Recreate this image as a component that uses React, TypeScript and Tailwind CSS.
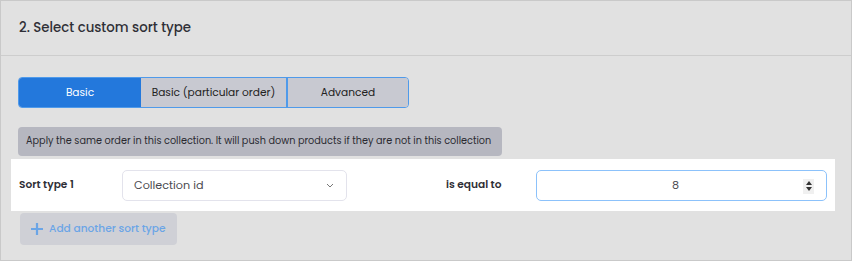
import React from "react";

export default function App() {
  return (
    <div
      className="w-[852px] h-[261px] bg-[#e1e1e1] border border-[#c9c9c9] flex flex-col"
      style={{ fontFamily: "Poppins, Inter, 'Noto Sans', sans-serif" }}
    >
      <div className="h-[55px] border-b border-[#cdcdcd] flex items-center px-[18px] shrink-0">
        <span className="text-[13.3px] font-medium text-[#2f2f36]">2. Select custom sort type</span>
      </div>
      <div className="flex flex-col pl-[17px] pt-[21px]">
        <div className="flex h-[31px] w-[391px] rounded-[4px] border border-[#4f9aea] overflow-hidden text-[10.6px]">
          <div className="w-[122px] bg-[#2378dc] text-white flex items-center justify-center">Basic</div>
          <div className="w-[147px] bg-[#c8c9d1] text-[#222] flex items-center justify-center border-r-2 border-[#4f9aea]">
            Basic (particular order)
          </div>
          <div className="flex-1 bg-[#c8c9d1] text-[#222] flex items-center justify-center">Advanced</div>
        </div>
        <div className="mt-[19px] h-[29px] w-[484px] rounded-[4px] bg-[#b6b7c0] flex items-center pl-[8px] text-[9.7px] text-[#2a2a30] whitespace-nowrap">
          Apply the same order in this collection. It will push down products if they are not in this collection
        </div>
        <div className="mt-[3px] -ml-[7px] w-[824px] h-[52px] bg-white flex items-center">
          <div className="w-[111px] pl-[8px] text-[10.6px] font-semibold text-[#2f2f36]">Sort type 1</div>
          <div className="w-[225px] h-[31px] border border-[#e3e3ec] rounded-[5px] flex items-center justify-between pl-[11px] pr-[12px]">
            <span className="text-[11.2px] text-[#4a4a50]">Collection id</span>
            <svg width="8" height="5" viewBox="0 0 8 5" fill="none" className="shrink-0">
              <path d="M1 1l3 3 3-3" stroke="#777" strokeWidth="1" />
            </svg>
          </div>
          <div className="w-[189px] pl-[99px] text-[10.6px] font-semibold text-[#2f2f36] whitespace-nowrap">is equal to</div>
          <div className="w-[291px] h-[31px] border border-[#8cc2fb] rounded-[5px] flex items-center relative">
            <span className="flex-1 text-center text-[11.2px] text-[#4a4a50] pr-[12px]">8</span>
            <div className="absolute right-[12px] top-[8px] w-[11px] h-[15px] bg-[#f0f0f0] flex flex-col items-center justify-center gap-[2px]">
              <svg width="6" height="4" viewBox="0 0 6 4"><path d="M3 0L6 4H0z" fill="#333" /></svg>
              <svg width="6" height="4" viewBox="0 0 6 4"><path d="M0 0h6L3 4z" fill="#333" /></svg>
            </div>
          </div>
        </div>
        <div className="mt-[2px] ml-[2px] w-[157px] h-[32px] rounded-[4px] bg-[#cfd0d6] flex items-center pl-[11px] gap-[6px]">
          <svg width="12" height="12" viewBox="0 0 12 12" className="shrink-0">
            <path d="M6 0v12M0 6h12" stroke="#6ba5e6" strokeWidth="2.2" />
          </svg>
          <span className="text-[10.6px] font-medium text-[#6ba5e6] whitespace-nowrap">Add another sort type</span>
        </div>
      </div>
    </div>
  );
}
